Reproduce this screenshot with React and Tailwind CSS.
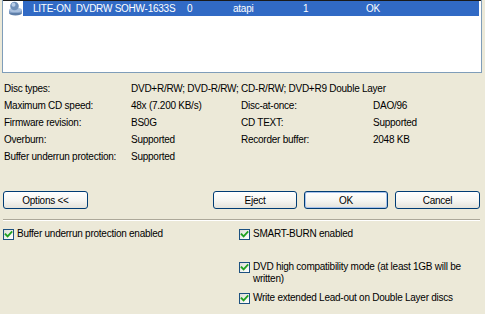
import React from "react";

function Check() {
  return (
    <span className="relative mt-[1px] w-[11px] h-[11px] shrink-0 border border-[#1C5180] bg-[linear-gradient(135deg,#DCDCD7_0%,#F4F4F0_60%,#FFFFFF_100%)] flex items-center justify-center">
      <svg width="9" height="9" viewBox="0 0 9 9">
        <path d="M1.5 4.2 L3.6 6.4 L7.6 2" fill="none" stroke="#21A121" strokeWidth="1.8" strokeLinecap="square" />
      </svg>
    </span>
  );
}

function CheckItem({ children, className = "" }) {
  return (
    <div className={"flex items-start " + className}>
      <Check />
      <span className="ml-[3px] leading-[12px]">{children}</span>
    </div>
  );
}

function Btn({ children, w, className = "", def = false }) {
  return (
    <div
      className={
        "h-[18px] flex items-center justify-center border border-[#003C74] rounded-[3px] bg-[linear-gradient(180deg,#FFFFFF_0%,#F5F5F1_55%,#E4E3DB_100%)] " +
        (def ? "shadow-[inset_0_0_0_1px_#A9C3EC] " : "") +
        w +
        " " +
        className
      }
    >
      {children}
    </div>
  );
}

function DriveIcon() {
  return (
    <svg width="15" height="15" viewBox="0 0 15 15">
      <ellipse cx="7.5" cy="12" rx="6.5" ry="2.5" fill="#5E7EA8" />
      <rect x="1" y="9" width="13" height="3" fill="#7E9CC4" />
      <ellipse cx="7.5" cy="9" rx="6.5" ry="2.3" fill="#A9C0DE" />
      <circle cx="6.5" cy="5" r="4.3" fill="#6F90BA" />
      <circle cx="5.5" cy="3.8" r="2" fill="#B9CDE8" />
    </svg>
  );
}

export default function App() {
  const rows = [
    ["Disc types:", "DVD+R/RW; DVD-R/RW; CD-R/RW; DVD+R9 Double Layer", null, null],
    ["Maximum CD speed:", "48x (7.200 KB/s)", "Disc-at-once:", "DAO/96"],
    ["Firmware revision:", "BS0G", "CD TEXT:", "Supported"],
    ["Overburn:", "Supported", "Recorder buffer:", "2048 KB"],
    ["Buffer underrun protection:", "Supported", null, null],
  ];
  return (
    <div className="w-[485px] h-[314px] overflow-hidden bg-[#ECE9D8] text-black text-[10px] tracking-[-0.25px] font-['Liberation_Sans',Arial,sans-serif]">
      {/* list box */}
      <div className="ml-[2px] w-[480px] h-[73px] border-x border-b border-[#7F9DB9] bg-white">
        <div className="h-px bg-[#1A1A1A]" />
        <div className="flex h-[15px] pl-[5px] pr-[2px]">
          <div className="w-[15px] h-[15px] shrink-0">
            <DriveIcon />
          </div>
          <div className="flex-1 flex items-center bg-[#316AC5] text-white pl-[10px]">
            <span className="w-[154px] whitespace-pre">LITE-ON  DVDRW SOHW-1633S</span>
            <span className="w-[46px]">0</span>
            <span className="w-[70px]">atapi</span>
            <span className="w-[63px]">1</span>
            <span>OK</span>
          </div>
        </div>
      </div>

      {/* info rows */}
      <div className="mt-[7px] pl-[4px]">
        {rows.map((r, i) => (
          <div key={i} className="flex h-[17px] leading-[17px] whitespace-nowrap">
            <span className="w-[127px]">{r[0]}</span>
            {r[2] === null ? (
              <span>{r[1]}</span>
            ) : (
              <>
                <span className="w-[110px]">{r[1]}</span>
                <span className="w-[132px]">{r[2]}</span>
                <span>{r[3]}</span>
              </>
            )}
          </div>
        ))}
      </div>

      {/* buttons */}
      <div className="mt-[26px] flex pl-[3px]">
        <Btn w="w-[85px]">Options &lt;&lt;</Btn>
        <Btn w="w-[84px]" className="ml-[125px]">Eject</Btn>
        <Btn w="w-[84px]" className="ml-[7px]" def>OK</Btn>
        <Btn w="w-[85px]" className="ml-[7px]">Cancel</Btn>
      </div>

      {/* separator */}
      <div className="mt-[10px] ml-[3px] w-[477px] h-px bg-[#ACA899]" />
      <div className="ml-[3px] w-[477px] h-px bg-white" />

      {/* checkboxes */}
      <div className="mt-[7px] flex pl-[3px]">
        <div className="w-[236px]">
          <CheckItem>Buffer underrun protection enabled</CheckItem>
        </div>
        <div className="flex flex-col">
          <CheckItem>SMART-BURN enabled</CheckItem>
          <CheckItem className="mt-[21px]">
            DVD high compatibility mode (at least 1GB will be
            <br />
            written)
          </CheckItem>
          <CheckItem className="mt-[7px]">Write extended Lead-out on Double Layer discs</CheckItem>
        </div>
      </div>
    </div>
  );
}
